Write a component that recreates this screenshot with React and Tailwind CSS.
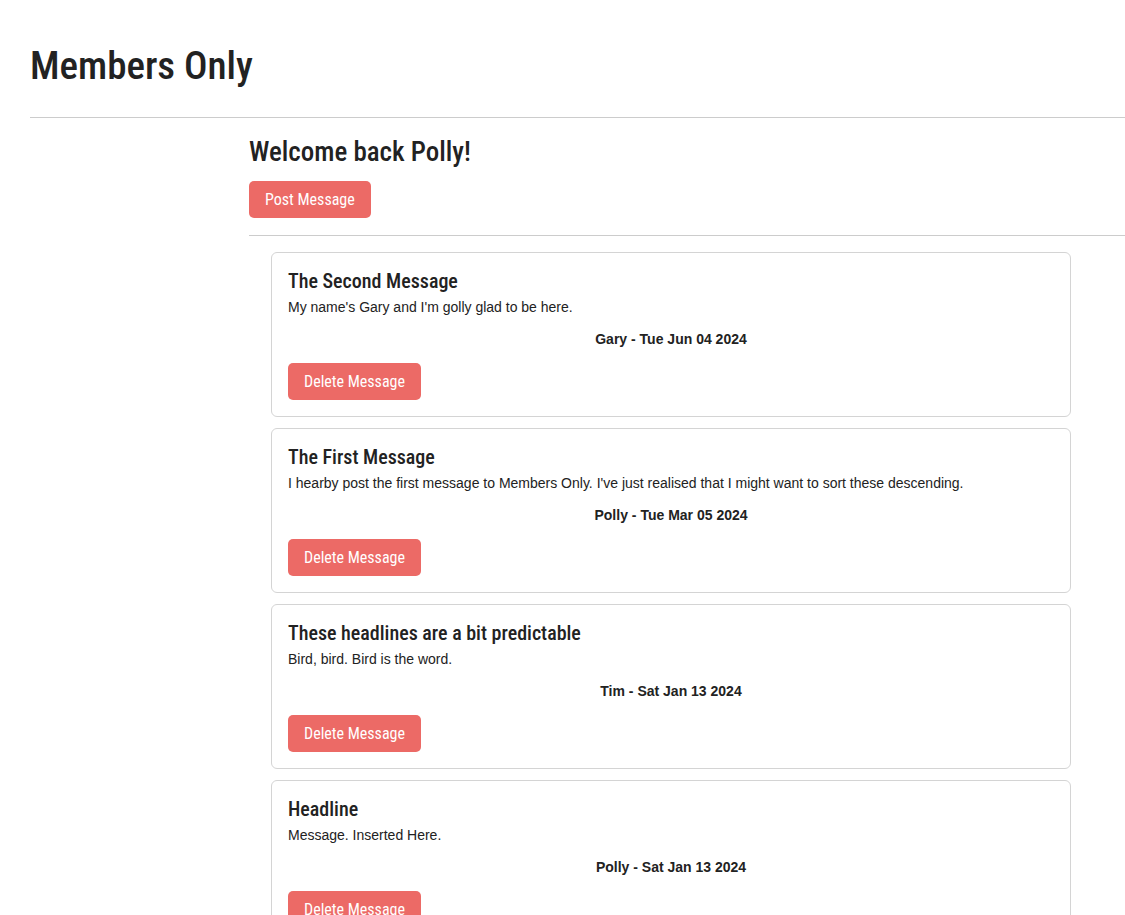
const messages = [
  {
    id: 1,
    title: "The Second Message",
    body: "My name's Gary and I'm golly glad to be here.",
    author: "Gary",
    date: "Tue Jun 04 2024",
  },
  {
    id: 2,
    title: "The First Message",
    body: "I hearby post the first message to Members Only. I've just realised that I might want to sort these descending.",
    author: "Polly",
    date: "Tue Mar 05 2024",
  },
  {
    id: 3,
    title: "These headlines are a bit predictable",
    body: "Bird, bird. Bird is the word.",
    author: "Tim",
    date: "Sat Jan 13 2024",
  },
  {
    id: 4,
    title: "Headline",
    body: "Message. Inserted Here.",
    author: "Polly",
    date: "Sat Jan 13 2024",
  },
];

const heading = "font-['Roboto_Condensed',sans-serif] text-[#222]";
const btn =
  "flex h-[37px] items-center rounded-[5px] bg-[#ec6a66] px-[16px] font-['Roboto_Condensed',sans-serif] text-[16px] text-white";

export default function App() {
  return (
    <div className="min-h-screen bg-white pl-[30px] font-['Liberation_Sans',Arial,sans-serif] text-[#222]">

      {/* HEADER */}
      <h1 className={`${heading} pt-[38px] pb-[23px] text-[39px] leading-[56px] font-medium`}>
        Members Only
      </h1>
      <hr className="border-t border-[#ccc]" />

      {/* MAIN */}
      <div className="ml-[219px]">
        <h2 className={`${heading} mt-[17px] text-[27px] leading-[34px] font-medium`}>
          Welcome back Polly!
        </h2>
        <button className={`${btn} mt-[12px]`}>Post Message</button>
        <hr className="mt-[17px] border-t border-[#ccc]" />

        {/* LIST */}
        <div className="ml-[22px] mt-[16px] flex w-[800px] flex-col gap-[11px] pb-8">
          {messages.map((m) => (
            <div key={m.id} className="rounded-[6px] border border-[#d4d4d4] px-[16px] pt-[15px] pb-[16px]">
              <h3 className={`${heading} text-[20px] leading-[26px] font-medium`}>{m.title}</h3>
              <p className="mt-[4px] text-[14px] leading-[18px]">{m.body}</p>
              <p className="mt-[14px] text-center text-[14px] font-bold leading-[18px]">
                {m.author} - {m.date}
              </p>
              <button className={`${btn} mt-[15px]`}>Delete Message</button>
            </div>
          ))}
        </div>
      </div>
    </div>
  );
}
